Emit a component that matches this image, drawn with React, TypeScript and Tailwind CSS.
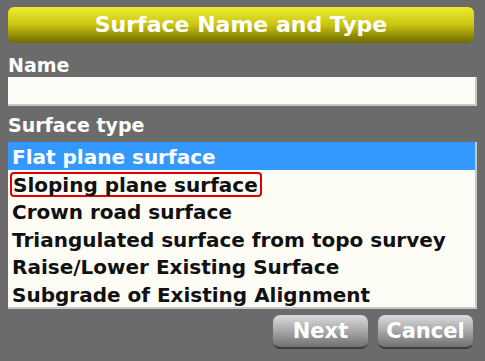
import React from "react";

const items = [
  "Flat plane surface",
  "Sloping plane surface",
  "Crown road surface",
  "Triangulated surface from topo survey",
  "Raise/Lower Existing Surface",
  "Subgrade of Existing Alignment",
];

export default function App() {
  return (
    <div
      className="w-[485px] h-[361px] bg-[#6b6b6b] overflow-hidden flex flex-col px-2 pt-[7px]"
      style={{ fontFamily: '"DejaVu Sans", sans-serif' }}
    >
      <div className="h-[36px] rounded-[6px] bg-gradient-to-b from-[#f0ec30] via-[#c8c410] to-[#6e6a00] flex items-center justify-center mr-[3px]">
        <span className="text-white font-bold text-[22px] leading-none">Surface Name and Type</span>
      </div>
      <div className="mt-[12px] text-white font-bold text-[19px] leading-[21px]">Name</div>
      <div className="mt-[1px] h-[29px] bg-[#fdfdf8] border-r-2 border-b-2 border-[#c8c8c8]"></div>
      <div className="mt-[9px] text-white font-bold text-[19px] leading-[21px]">Surface type</div>
      <div className="mt-[6px] h-[167px] bg-[#fdfdf6] border-r-2 border-b-2 border-[#c8c8c8] flex flex-col">
        {items.map((t, i) => (
          <div
            key={t}
            className={
              "h-[27.5px] shrink-0 flex items-center pt-[3px] text-[20px] font-bold leading-none " +
              (i === 0 ? "bg-[#3399ff] text-white" : "text-[#111]")
            }
          >
            {i === 1 ? (
              <span className="ml-[2px] pl-[1px] pr-[2px] h-[25px] flex items-center border-2 border-[#e00000] rounded-[4px]">
                {t}
              </span>
            ) : (
              <span className="pl-[4px]">{t}</span>
            )}
          </div>
        ))}
      </div>
      <div className="mt-[6px] flex justify-end gap-[10px] mr-[4px]">
        <button className="w-[95px] h-[34px] rounded-[7px] bg-gradient-to-b from-[#dcdcdc] via-[#a8a8a8] to-[#707070] border-b-2 border-[#3c3c3c] text-white font-bold text-[21px] leading-none">
          Next
        </button>
        <button className="w-[95px] h-[34px] rounded-[7px] bg-gradient-to-b from-[#dcdcdc] via-[#a8a8a8] to-[#707070] border-b-2 border-[#3c3c3c] text-white font-bold text-[21px] leading-none">
          Cancel
        </button>
      </div>
    </div>
  );
}
